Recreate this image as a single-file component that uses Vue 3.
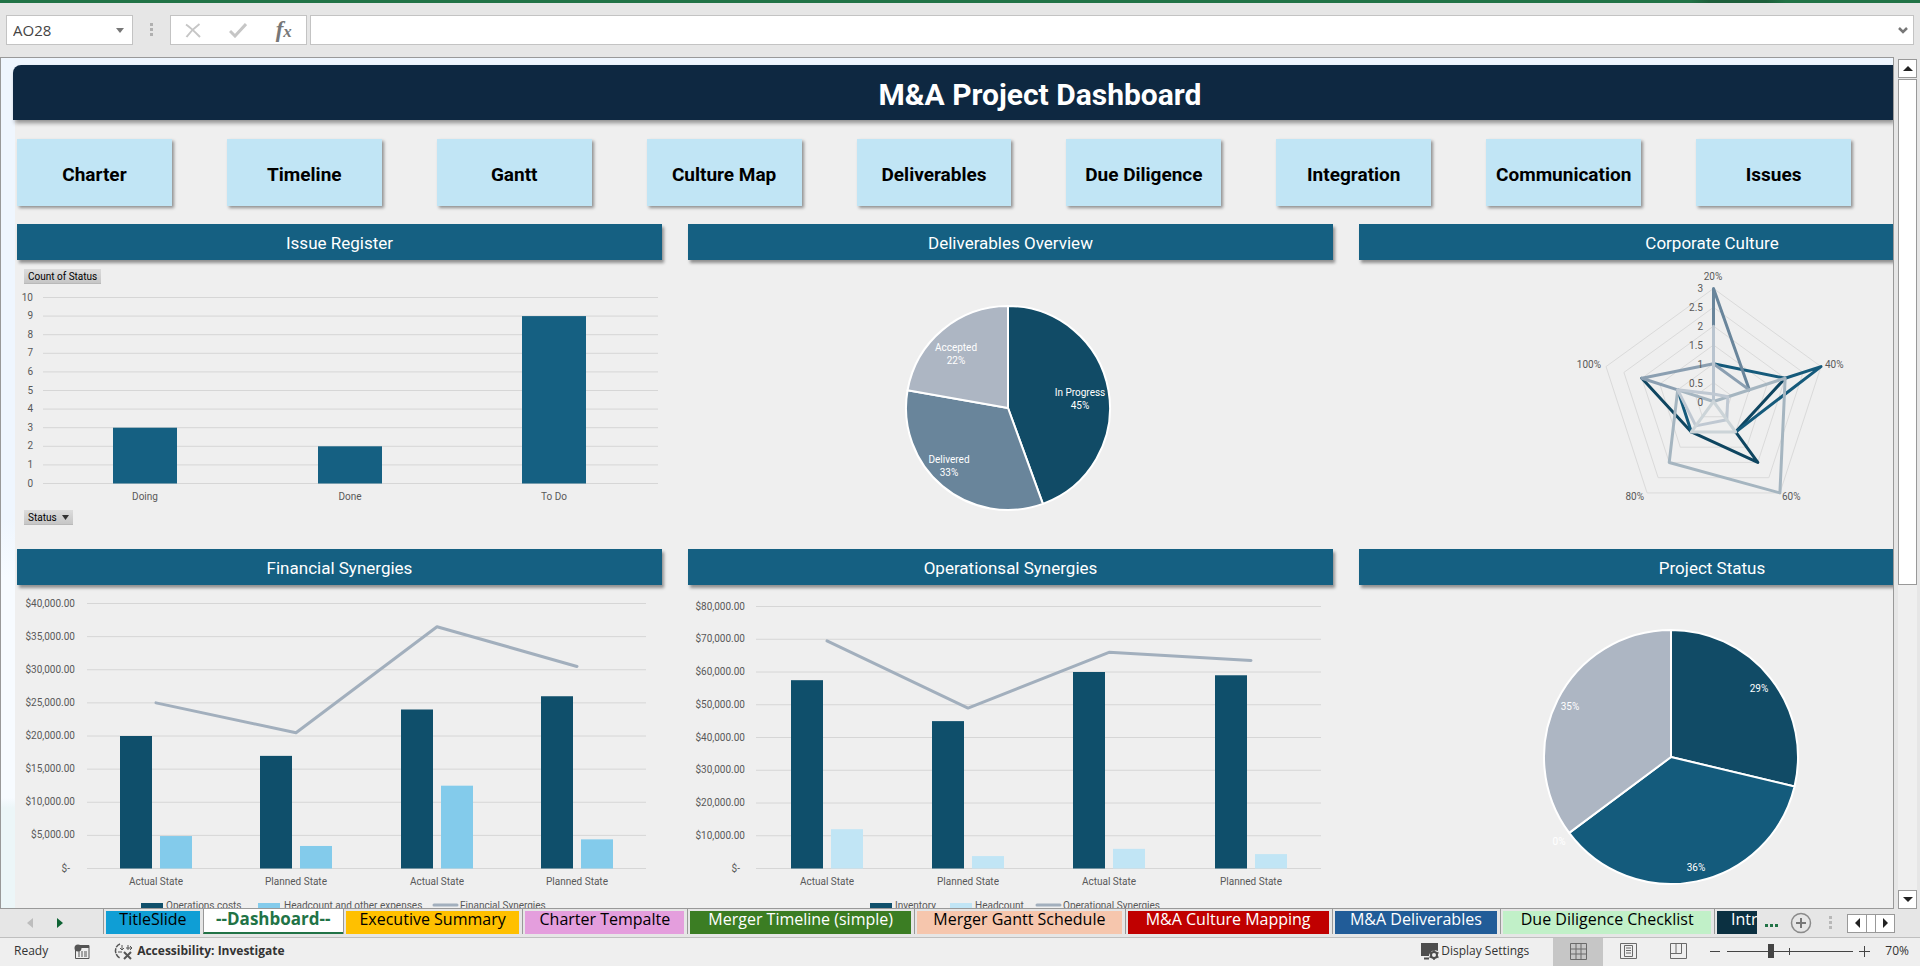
<script setup>
const links = ['Charter', 'Timeline', 'Gantt', 'Culture Map', 'Deliverables', 'Due Diligence', 'Integration', 'Communication', 'Issues']

const tabs = [
  { name: 'TitleSlide', tone: 'cyan' },
  { name: '--Dashboard--', tone: 'active' },
  { name: 'Executive Summary', tone: 'gold' },
  { name: 'Charter Tempalte', tone: 'pink' },
  { name: 'Merger Timeline (simple)', tone: 'green' },
  { name: 'Merger Gantt Schedule', tone: 'peach' },
  { name: 'M&A Culture Mapping', tone: 'red' },
  { name: 'M&A Deliverables', tone: 'blue' },
  { name: 'Due Diligence Checklist', tone: 'mint' },
  { name: 'Intro', tone: 'navy' },
]

const issues = [
  { label: 'Doing', value: 3, x: 145 },
  { label: 'Done', value: 2, x: 350 },
  { label: 'To Do', value: 9, x: 554 },
]
const issueY = (v) => 483.5 - v * 18.6

const money = (v) => (v === 0 ? '$-' : '$' + v.toLocaleString('en-US') + '.00')

const combos = {
  financial: {
    viewBox: '17 585 645 335', left: 87, right: 646, labelX: 75, max: 40000, tick: 5000, top: 603.5, base: 868.5,
    light: '#83cbeb', centers: [156, 296, 437, 577],
    bars: [20000, 17000, 24000, 26000], small: [4900, 3400, 12500, 4400], line: [25000, 20500, 36500, 30500],
    legend: [{ x: 141, t: 166, name: 'Operations costs' }, { x: 258, t: 284, name: 'Headcount and other expenses' }, { x: 433, t: 460, name: 'Financial Synergies' }],
  },
  operational: {
    viewBox: '688 585 645 335', left: 756, right: 1321, labelX: 745, max: 80000, tick: 10000, top: 606.5, base: 868.5,
    light: '#c1e5f5', centers: [827, 968, 1109, 1251],
    bars: [57500, 45000, 60000, 59000], small: [12000, 3800, 6000, 4400], line: [69500, 49000, 66000, 63500],
    legend: [{ x: 870, t: 895, name: 'Inventory' }, { x: 950, t: 975, name: 'Headcount' }, { x: 1036, t: 1063, name: 'Operational Synergies' }],
  },
}
const comboY = (c, v) => c.base - (v / c.max) * (c.base - c.top)
const comboTicks = (c) => Array.from({ length: c.max / c.tick + 1 }, (_, i) => i * c.tick)
const comboLine = (c) => c.line.map((v, i) => `${c.centers[i]},${comboY(c, v)}`).join(' ')

const slice = (cx, cy, r, from, to) => {
  const pt = (deg) => {
    const a = (deg * Math.PI) / 180
    return `${(cx + r * Math.sin(a)).toFixed(2)} ${(cy - r * Math.cos(a)).toFixed(2)}`
  }
  return `M${cx} ${cy}L${pt(from)}A${r} ${r} 0 ${to - from > 180 ? 1 : 0} 1 ${pt(to)}Z`
}
const deliverables = [
  { d: slice(1008, 408, 102, 0, 160), fill: '#114b66', label: 'In Progress', pct: '45%', x: 1080, y: 396 },
  { d: slice(1008, 408, 102, 160, 280), fill: '#69859b', label: 'Delivered', pct: '33%', x: 949, y: 463 },
  { d: slice(1008, 408, 102, 280, 360), fill: '#adb6c3', label: 'Accepted', pct: '22%', x: 956, y: 351 },
]
const project = [
  { d: slice(1671, 757, 127, 0, 103.4), fill: '#114b66', pct: '29%', x: 1759, y: 692 },
  { d: slice(1671, 757, 127, 103.4, 233.3), fill: '#145b7c', pct: '36%', x: 1696, y: 871 },
  { d: slice(1671, 757, 127, 233.3, 360), fill: '#adb6c3', pct: '35%', x: 1570, y: 710 },
]

/* Each radar point is [axis, value]; axes run clockwise from the top. */
const radar = (points) =>
  points
    .map(([axis, v]) => {
      const a = (axis * 72 * Math.PI) / 180
      const r = (v * 113) / 3
      return `${(1713.5 + r * Math.sin(a)).toFixed(2)},${(401.5 - r * Math.cos(a)).toFixed(2)}`
    })
    .join(' ')
const rings = [0.5, 1, 1.5, 2, 2.5, 3].map((v) => radar([0, 1, 2, 3, 4].map((a) => [a, v])))
const radarLines = [
  { c: '#0e4560', p: [[1, 2], [2, 1], [2, 2], [3, 1], [4, 2]] },
  { c: '#155a7b', p: [[0, 1], [1, 2], [1, 3], [2, 1]] },
  { c: '#155a7b', p: [[4, 1], [3, 1]] },
  { c: '#69859b', p: [[0, 1], [0, 3], [1, 1]] },
  { c: '#8b9fb1', p: [[1, 1], [0, 1], [4, 2], [4, 1]] },
  { c: '#a5b5c0', p: [[0, 0], [1, 2], [2, 3], [3, 2], [4, 1], [0, 0]] },
  { c: '#b9c4cf', p: [[0, 2], [0, 0]] },
  { c: '#bfc8d2', p: [[0, 0.2], [1, 0.4], [2, 0.6], [3, 0.8], [4, 1], [0, 0.2]] },
  { c: '#ccd4d8', p: [[0, 0], [2, 1], [3, 1], [0, 0]] },
]
</script>

<template>
  <div class="app">
    <div class="accent"></div>
    <header class="formula">
      <div class="namebox">
        <input type="text" value="AO28" aria-label="Name box" />
        <button type="button" aria-label="Open name list">
          <svg width="8" height="5" viewBox="0 0 8 5"><path d="M0 0h8L4 5z" fill="#777" /></svg>
        </button>
      </div>
      <svg class="grip" width="3" height="14" viewBox="0 0 3 14"><path d="M0 0h3v3H0zM0 5h3v3H0zM0 10h3v3H0z" fill="#b0b0b0" /></svg>
      <div class="actions">
        <button type="button" aria-label="Cancel">
          <svg width="16" height="15" viewBox="0 0 16 15"><path d="M1 1.500C5 4 11 10 15 14M14.500 1C9 5 5 9 1.500 14" fill="none" stroke="#c6c6c6" stroke-width="2" /></svg>
        </button>
        <button type="button" aria-label="Enter">
          <svg width="18" height="15" viewBox="0 0 18 15"><path d="M1 8l5 5L17 1" fill="none" stroke="#c6c6c6" stroke-width="3" /></svg>
        </button>
        <button type="button" class="fx" aria-label="Insert function"><i>f</i><i class="sub">x</i></button>
      </div>
      <div class="entry">
        <input type="text" aria-label="Formula" />
        <button type="button" aria-label="Expand formula bar">
          <svg width="10" height="7" viewBox="0 0 10 7"><path d="M1 1l4 4 4-4" fill="none" stroke="#777" stroke-width="2.500" /></svg>
        </button>
      </div>
    </header>

    <div class="workspace">
      <main class="sheet">
        <h1>M&amp;A Project Dashboard</h1>
        <div class="board">
          <nav class="links">
            <a v-for="l in links" :key="l" href="#">{{ l }}</a>
          </nav>
          <div class="panels">
            <section>
              <h2>Issue Register</h2>
              <button type="button" class="pivot first">Count of Status</button>
              <svg class="chart" viewBox="17 284 645 226">
                <g v-for="n in 11" :key="n">
                  <line x1="43" x2="658" :y1="issueY(n - 1)" :y2="issueY(n - 1)" class="rule" />
                  <text x="33" :y="issueY(n - 1) + 3" text-anchor="end">{{ n - 1 }}</text>
                </g>
                <g v-for="b in issues" :key="b.label">
                  <rect :x="b.x - 32" :y="issueY(b.value)" width="64" :height="b.value * 18.6" fill="#156082" />
                  <text :x="b.x" y="500" text-anchor="middle">{{ b.label }}</text>
                </g>
              </svg>
              <button type="button" class="pivot">Status
                <svg width="7" height="5" viewBox="0 0 7 5"><path d="M0 0h7L3.500 5z" fill="#333" /></svg>
              </button>
            </section>

            <section>
              <h2>Deliverables Overview</h2>
              <svg class="chart" viewBox="688 260 645 289">
                <path v-for="s in deliverables" :key="s.label" :d="s.d" :fill="s.fill" class="slice" />
                <g v-for="s in deliverables" :key="s.pct" class="onslice">
                  <text :x="s.x" :y="s.y" text-anchor="middle">{{ s.label }}</text>
                  <text :x="s.x" :y="s.y + 13" text-anchor="middle">{{ s.pct }}</text>
                </g>
              </svg>
            </section>

            <section>
              <h2>Corporate Culture</h2>
              <svg class="chart" viewBox="1359 260 706 289">
                <polygon v-for="r in rings" :key="r" :points="r" class="ring" />
                <polyline v-for="(l, i) in radarLines" :key="i" :points="radar(l.p)" :stroke="l.c" class="radar" />
                <text v-for="n in 7" :key="n" x="1703" :y="405.5 - (n - 1) * 18.9" text-anchor="end">{{ (n - 1) / 2 }}</text>
                <text x="1713" y="280" text-anchor="middle">20%</text>
                <text x="1825" y="368">40%</text>
                <text x="1782" y="500">60%</text>
                <text x="1644" y="500" text-anchor="end">80%</text>
                <text x="1601" y="368" text-anchor="end">100%</text>
              </svg>
            </section>

            <section v-for="(c, key) in combos" :key="key">
              <h2>{{ key === 'financial' ? 'Financial Synergies' : 'Operationsal Synergies' }}</h2>
              <svg class="chart" :viewBox="c.viewBox">
                <g v-for="v in comboTicks(c)" :key="v">
                  <line :x1="c.left" :x2="c.right" :y1="comboY(c, v)" :y2="comboY(c, v)" class="rule" />
                  <text :x="v ? c.labelX : c.labelX - 5" :y="comboY(c, v) + 3" text-anchor="end">{{ money(v) }}</text>
                </g>
                <g v-for="(x, i) in c.centers" :key="x">
                  <rect :x="x - 36" :y="comboY(c, c.bars[i])" width="32" :height="c.base - comboY(c, c.bars[i])" fill="#0f4f6b" />
                  <rect :x="x + 4" :y="comboY(c, c.small[i])" width="32" :height="c.base - comboY(c, c.small[i])" :fill="c.light" />
                  <text :x="x" y="885" text-anchor="middle">{{ i % 2 ? 'Planned State' : 'Actual State' }}</text>
                </g>
                <polyline :points="comboLine(c)" class="trend" />
                <rect :x="c.legend[0].x" y="903" width="22" height="7" fill="#0f4f6b" />
                <rect :x="c.legend[1].x" y="903" width="22" height="7" :fill="c.light" />
                <line :x1="c.legend[2].x + 1" :x2="c.legend[2].x + 24" y1="905" y2="905" class="trend" />
                <text v-for="l in c.legend" :key="l.name" :x="l.t" y="909">{{ l.name }}</text>
              </svg>
            </section>

            <section>
              <h2>Project Status</h2>
              <svg class="chart" viewBox="1359 585 706 335">
                <path v-for="s in project" :key="s.pct" :d="s.d" :fill="s.fill" class="slice" />
                <g class="onslice">
                  <text v-for="s in project" :key="s.pct" :x="s.x" :y="s.y" text-anchor="middle">{{ s.pct }}</text>
                  <text x="1559" y="845" text-anchor="middle">0%</text>
                </g>
              </svg>
            </section>
          </div>
        </div>
      </main>
      <div class="vscroll">
        <button type="button" aria-label="Scroll up"><svg width="10" height="5" viewBox="0 0 10 5"><path d="M0 5h10L5 0z" fill="#222" /></svg></button>
        <div class="thumb"></div>
        <div class="track"></div>
        <button type="button" aria-label="Scroll down"><svg width="10" height="5" viewBox="0 0 10 5"><path d="M0 0h10L5 5z" fill="#222" /></svg></button>
      </div>
    </div>

    <div class="tabbar">
      <div class="steps">
        <button type="button" aria-label="Previous sheets"><svg width="6" height="10" viewBox="0 0 6 10"><path d="M6 0v10L0 5z" fill="#bdbdbd" /></svg></button>
        <button type="button" aria-label="Next sheets"><svg width="6" height="10" viewBox="0 0 6 10"><path d="M0 0v10l6-5z" fill="#0e6334" /></svg></button>
      </div>
      <div class="tabs">
        <button v-for="t in tabs" :key="t.name" type="button" class="tab" :class="t.tone"><span>{{ t.name }}</span></button>
      </div>
      <button type="button" class="more" aria-label="More sheets">
        <svg width="14" height="3" viewBox="0 0 14 3"><path d="M0 0h3v3H0zM5 0h3v3H5zM10 0h3v3h-3z" fill="#217346" /></svg>
      </button>
      <button type="button" class="add" aria-label="New sheet">
        <svg width="22" height="22" viewBox="0 0 22 22"><circle cx="11" cy="11" r="9.500" fill="none" stroke="#8a8a8a" stroke-width="1.500" /><path d="M11 6v10M6 11h10" stroke="#777" stroke-width="2" /></svg>
      </button>
      <svg class="dots" width="3" height="14" viewBox="0 0 3 14"><path d="M0 0h3v3H0zM0 5h3v3H0zM0 10h3v3H0z" fill="#b8b8b8" /></svg>
      <div class="hscroll">
        <button type="button" aria-label="Scroll left"><svg width="5" height="10" viewBox="0 0 5 10"><path d="M5 0v10L0 5z" fill="#222" /></svg></button>
        <button type="button" aria-label="Scroll right"><svg width="5" height="10" viewBox="0 0 5 10"><path d="M0 0v10l5-5z" fill="#222" /></svg></button>
      </div>
    </div>

    <footer class="status">
      <span class="ready">Ready</span>
      <svg class="macro" width="16" height="15" viewBox="0 0 16 15">
        <path d="M6 1.500h9v13H1.500V6" fill="none" stroke="#555" />
        <path d="M7 1h8v3H7z" fill="#555" /><circle cx="4" cy="4" r="3.500" fill="#555" />
        <path d="M4 8h2M7 8h2M10 8h3M4 10h2M7 10h2M10 10h3M4 12h2M7 12h2M10 12h3" stroke="#555" />
      </svg>
      <button type="button" class="access">
        <svg width="20" height="17" viewBox="0 0 20 17" fill="none" stroke="#555">
          <path d="M6 1C0 3 0 12 6 15" stroke-width="1.500" stroke-dasharray="5 1" />
          <path d="M8 2v4M6 5l2 2 2-2M4 9h4M14 2v5M12 5h6M16 3l2 2-2 2" />
          <path d="M10 9l7 7M17 9l-7 7" stroke-width="2" />
        </svg>
        Accessibility: Investigate
      </button>
      <button type="button" class="display">
        <svg width="19" height="18" viewBox="0 0 19 18">
          <path d="M1 1h17v8a6 6 0 0 0-9 5H1z" fill="#4d4d4d" /><path d="M4 16.500h5" stroke="#4d4d4d" stroke-width="2" />
          <circle cx="14" cy="13" r="3" fill="none" stroke="#4d4d4d" stroke-width="2" />
          <path d="M14 8v2M14 16v2M9.500 10.500l2 1M16.500 14.500l2 1M9.500 15.500l2-1M16.500 11.500l2-1" stroke="#4d4d4d" stroke-width="1.500" />
        </svg>
        Display Settings
      </button>
      <div class="views">
        <button type="button" class="on" aria-label="Normal view"><svg width="17" height="17" viewBox="0 0 17 17"><path d="M.5.5h16v16H.5zM.5 6h16M.5 11h16M6 .5v16M11 .5v16" fill="none" stroke="#6a6a6a" /></svg></button>
        <button type="button" aria-label="Page layout view"><svg width="17" height="17" viewBox="0 0 17 17"><path d="M.5.5h16v15H.5zM4.500 2.500h8v11h-8zM6 5h5M6 7.500h5M6 10h5" fill="none" stroke="#6a6a6a" /></svg></button>
        <button type="button" aria-label="Page break view"><svg width="17" height="17" viewBox="0 0 17 17"><path d="M.5.5h16v15H.5zM6 .5v10M11.500.5v10M.5 10.500h11" fill="none" stroke="#6a6a6a" /></svg></button>
      </div>
      <button type="button" class="zoombtn" aria-label="Zoom out"><svg width="11" height="11" viewBox="0 0 11 11"><path d="M0 5.500h10" stroke="#444" /></svg></button>
      <input class="zoom" type="range" min="0" max="100" value="34" aria-label="Zoom" />
      <button type="button" class="zoombtn" aria-label="Zoom in"><svg width="11" height="11" viewBox="0 0 11 11"><path d="M0 5.500h11M5.500 0v11" stroke="#444" /></svg></button>
      <span class="percent">70%</span>
    </footer>
  </div>
</template>

<style>
body {
  margin: 0;
}
</style>

<style scoped>
* {
  box-sizing: border-box;
}
button {
  padding: 0;
  border: 0;
  background: none;
  font: inherit;
  color: inherit;
  display: flex;
  align-items: center;
  justify-content: center;
}
svg {
  flex: none;
}
.app {
  display: flex;
  flex-direction: column;
  height: 100vh;
  overflow: hidden;
  background: #e6e6e6;
  font-family: "Open Sans", "Noto Sans", sans-serif;
  color: #333;
}
.accent {
  flex: none;
  height: 3px;
  background: linear-gradient(90deg, #217346 88%, #1d5f3b 89%, #1d5f3b 92%, #217346 93%);
}
.formula {
  flex: none;
  display: flex;
  align-items: center;
  height: 54px;
  padding: 0 6px;
}
.namebox,
.actions,
.entry {
  display: flex;
  align-items: center;
  height: 30px;
  border: 1px solid #c3c3c3;
  background: #fff;
}
.namebox {
  width: 127px;
  padding-right: 8px;
}
.formula input {
  flex: 1;
  min-width: 0;
  height: 100%;
  border: 0;
  padding: 0 6px;
  outline: 0;
  background: none;
  font: 15px "Open Sans", sans-serif;
  color: #444;
}
.grip {
  margin: 0 17px;
}
.actions {
  width: 137px;
  margin-right: 3px;
  justify-content: space-around;
}
.fx {
  font: 700 23px "Liberation Serif", serif;
  color: #777;
}
.fx .sub {
  padding-top: 3px;
  font-size: 17px;
}
.entry {
  flex: 1;
  padding-right: 5px;
}
.workspace {
  flex: 1;
  min-height: 0;
  display: flex;
}
.sheet {
  flex: 1;
  min-width: 0;
  overflow: hidden;
  border: 1px solid #999;
  padding: 7px 0 0 14px;
  background: linear-gradient(#eff6fe 0, #eff6fe 460px, #f7fbff 520px, #f7fbff 740px, #ecf6f8 750px);
  font-family: Roboto, "Liberation Sans", sans-serif;
}
h1 {
  position: relative;
  display: flex;
  align-items: center;
  justify-content: center;
  height: 55px;
  margin: 0 0 0 -2px;
  padding: 3px 0 0 174px;
  border-radius: 8px 0 0 0;
  background: #0e2841;
  box-shadow: 2px 3px 4px #00000066;
  color: #fff;
  font-size: 30px;
  font-weight: 700;
}
.board {
  padding: 19px 0 0 2px;
  background: #efefef;
}
.links {
  display: grid;
  grid-template-columns: repeat(9, minmax(0, 1fr));
  column-gap: 55px;
  padding-right: 42px;
}
.links a {
  display: flex;
  align-items: center;
  justify-content: center;
  height: 67px;
  padding-top: 3px;
  background: #c1e5f5;
  box-shadow: 2px 2px 3px #00000066;
  color: #000;
  font-size: 19px;
  font-weight: 700;
  text-decoration: none;
  white-space: nowrap;
}
.panels {
  display: grid;
  grid-template-columns: 645fr 645fr 706fr;
  column-gap: 26px;
  margin: 18px -172px 0 0;
}
h2 {
  display: flex;
  align-items: center;
  justify-content: center;
  height: 36px;
  margin: 0;
  padding-top: 2px;
  background: #156082;
  box-shadow: 2px 3px 3px #00000066;
  color: #fff;
  font-size: 17px;
  font-weight: 400;
}
.chart {
  display: block;
  width: 100%;
}
.chart text {
  font-size: 10px;
  fill: #595959;
}
.chart .onslice text {
  fill: #fff;
}
.rule {
  stroke: #d6d6d6;
}
.ring {
  fill: none;
  stroke: #dadada;
}
.radar,
.trend {
  fill: none;
  stroke-width: 3px;
  stroke-linejoin: round;
  stroke-linecap: round;
}
.trend {
  stroke: #a2afbd;
}
.slice {
  stroke: #fff;
  stroke-width: 2px;
  stroke-linejoin: round;
}
.pivot {
  height: 15px;
  margin-left: 7px;
  padding: 0 4px;
  gap: 5px;
  background: linear-gradient(#dcdcdc, #c6c6c6);
  border-bottom: 1px solid #b9b9b9;
  font-size: 10px;
  color: #000;
}
.pivot.first {
  margin-top: 9px;
}
.vscroll {
  flex: none;
  display: flex;
  flex-direction: column;
  width: 19px;
  margin: 2px 3px 0 4px;
}
.vscroll button {
  height: 19px;
  border: 1px solid #999;
  background: #fff;
}
.thumb {
  height: 506px;
  margin-top: 1px;
  border: 1px solid #999;
  background: #fff;
}
.track {
  flex: 1;
  background: #efefef;
}
.tabbar {
  flex: none;
  display: flex;
  align-items: center;
  height: 29px;
  padding: 0 25px 0 0;
  border-bottom: 1px solid #bfbfbf;
}
.steps {
  display: flex;
  gap: 24px;
  width: 103px;
  padding-left: 27px;
}
.tabs {
  flex: 1;
  min-width: 0;
  display: grid;
  grid-template-columns: 100fr 140fr 180fr 165fr 227fr 211fr 207fr 169fr 214fr 43fr;
  height: 100%;
}
.tab {
  min-width: 0;
  height: 25px;
  padding: 2px 3px 0 2px;
  border-left: 1px solid #999;
  font-size: 16px;
  line-height: 16px;
  color: #000;
  white-space: nowrap;
}
.tab span {
  display: block;
  width: 100%;
  height: 23px;
  overflow: hidden;
}
.tab.active {
  padding: 0;
  color: #217346;
  font-size: 17px;
  font-weight: 700;
  border-bottom: 2px solid #217346;
  background: #fff;
}
.active span {
  padding-top: 2px;
}
.gold span {
  background: #ffc000;
}
.cyan span {
  background: #0f9ed5;
}
.pink span {
  background: #e49edd;
}
.green span {
  background: #3b7d23;
  color: #fff;
}
.peach span {
  background: #f6c6ad;
}
.red span {
  background: #c00000;
  color: #fff;
}
.blue span {
  background: #215c98;
  color: #fff;
}
.mint span {
  background: #c1f0c8;
}
.tab.navy {
  padding-right: 0;
}
.navy span {
  padding-left: 14px;
  background: #0b3041;
  color: #fff;
  text-align: left;
}
.more {
  margin: 4px 11px 0 8px;
}
.dots {
  margin: 0 15px 0 17px;
}
.hscroll {
  display: flex;
  justify-content: space-between;
  width: 48px;
  height: 19px;
  background: #fff;
  border: 1px solid #999;
}
.hscroll button {
  width: 19px;
}
.hscroll button:first-child {
  border-right: 1px solid #999;
}
.hscroll button:last-child {
  border-left: 1px solid #999;
}
.status {
  flex: none;
  display: flex;
  align-items: center;
  height: 28px;
  padding: 0 11px 0 14px;
  background: #efefef;
  font-size: 12px;
  line-height: 14px;
}
.status > span,
.status > svg,
.status > .access,
.status > .display,
.status > .zoombtn,
.status > .zoom {
  margin-bottom: 2px;
}
.status > .macro {
  margin-left: 26px;
  margin-right: 24px;
}
.status > .access {
  gap: 3px;
  font-weight: 700;
}
.status > .display {
  gap: 2px;
  margin-left: auto;
}
.views {
  display: flex;
  align-self: stretch;
  margin: 0 7px 0 24px;
}
.views button {
  width: 50px;
  padding-bottom: 2px;
}
.views .on {
  background: #c6c6c6;
}
.zoom {
  appearance: none;
  width: 126px;
  height: 14px;
  margin: 0 6px;
  background:
    linear-gradient(#444, #444) 62px 50% / 1px 7px no-repeat,
    linear-gradient(#444, #444) 0 50% / 100% 1px no-repeat;
}
.zoom::-webkit-slider-thumb {
  appearance: none;
  width: 6px;
  height: 14px;
  background: #444;
}
.status > .percent {
  margin-left: 15px;
}
</style>
